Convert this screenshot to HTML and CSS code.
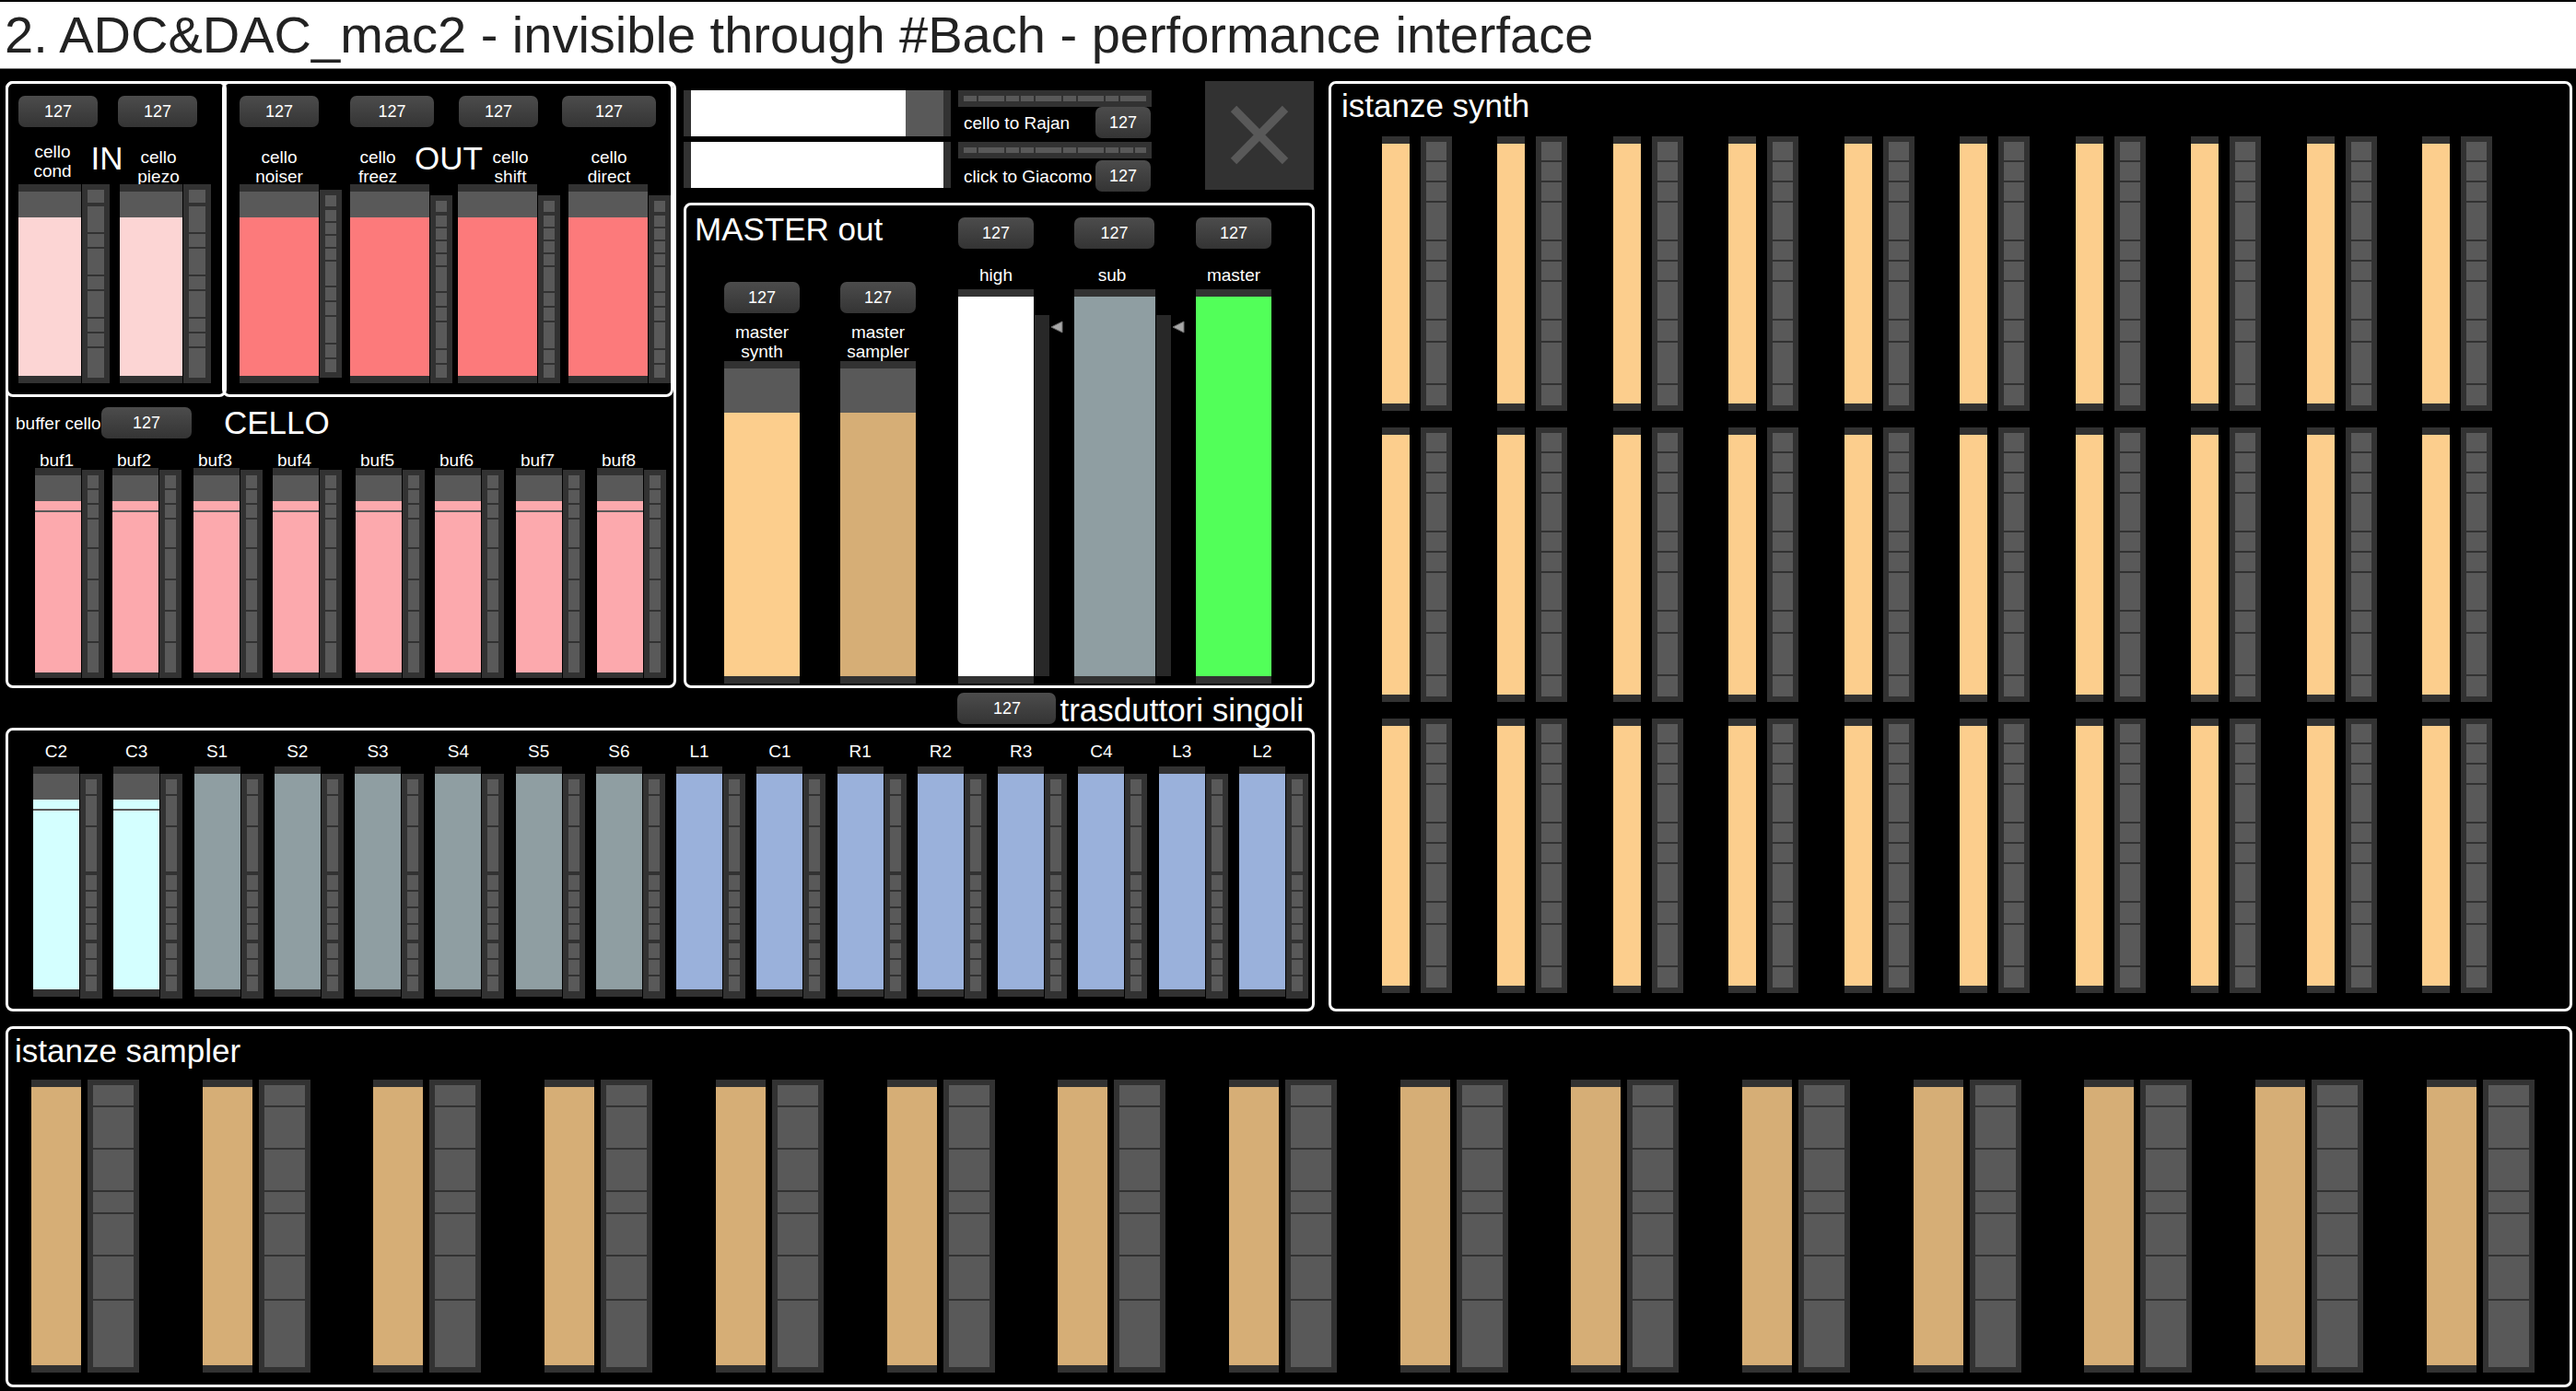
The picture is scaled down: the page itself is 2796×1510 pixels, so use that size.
FILE: index.html
```html
<!DOCTYPE html>
<html lang="it">
<head>
<meta charset="utf-8">
<title>ADC&amp;DAC_mac2 - performance interface</title>
<link rel="stylesheet" href="styles.css">
</head>
<body>
<header class="titlebar"><h1>2. ADC&amp;DAC_mac2 - invisible through #Bach - performance interface</h1></header>
<main class="board">
<div class="left">
<div class="top">
<section class="panel cello">
<div class="io">
<section class="panel in">
<div class="numbers"><input class="num" aria-label="cello cond level" value="127"><input class="num" aria-label="cello piezo level" value="127"></div>
<div class="names"><label class="raised" for="cond">cello<br>cond</label><h2>IN</h2><label for="piezo">cello<br>piezo</label></div>
<div class="faders">
<div class="strip"><input class="fader" id="cond" type="range" max="127" value="106"><i class="vu"></i></div>
<div class="strip"><input class="fader" id="piezo" type="range" max="127" value="106"><i class="vu"></i></div>
</div>
</section>
<section class="panel out">
<div class="numbers"><input class="num" aria-label="cello noiser level" value="127"><input class="num wide" aria-label="cello freez level" value="127"><input class="num" aria-label="cello shift level" value="127"><input class="num wider" aria-label="cello direct level" value="127"></div>
<div class="names"><label for="noiser">cello<br>noiser</label><label for="freez">cello<br>freez</label><h2>OUT</h2><label for="shift">cello<br>shift</label><label for="direct">cello<br>direct</label></div>
<div class="faders">
<div class="strip"><input class="fader" id="noiser" type="range" max="127" value="106"><i class="vu"></i></div>
<div class="strip"><input class="fader" id="freez" type="range" max="127" value="106"><i class="vu"></i></div>
<div class="strip"><input class="fader" id="shift" type="range" max="127" value="106"><i class="vu"></i></div>
<div class="strip"><input class="fader" id="direct" type="range" max="127" value="106"><i class="vu"></i></div>
</div>
</section>
</div>
<div class="bufhead"><label for="bufcello">buffer cello</label><input class="num" id="bufcello" value="127"><h2>CELLO</h2></div>
<div class="buffers">
<div class="channel"><label for="buf1">buf1</label><div class="strip"><input class="fader marked" id="buf1" type="range" max="127" value="110"><i class="vu"></i></div></div>
<div class="channel"><label for="buf2">buf2</label><div class="strip"><input class="fader marked" id="buf2" type="range" max="127" value="110"><i class="vu"></i></div></div>
<div class="channel"><label for="buf3">buf3</label><div class="strip"><input class="fader marked" id="buf3" type="range" max="127" value="110"><i class="vu"></i></div></div>
<div class="channel"><label for="buf4">buf4</label><div class="strip"><input class="fader marked" id="buf4" type="range" max="127" value="110"><i class="vu"></i></div></div>
<div class="channel"><label for="buf5">buf5</label><div class="strip"><input class="fader marked" id="buf5" type="range" max="127" value="110"><i class="vu"></i></div></div>
<div class="channel"><label for="buf6">buf6</label><div class="strip"><input class="fader marked" id="buf6" type="range" max="127" value="110"><i class="vu"></i></div></div>
<div class="channel"><label for="buf7">buf7</label><div class="strip"><input class="fader marked" id="buf7" type="range" max="127" value="110"><i class="vu"></i></div></div>
<div class="channel"><label for="buf8">buf8</label><div class="strip"><input class="fader marked" id="buf8" type="range" max="127" value="110"><i class="vu"></i></div></div>
</div>
</section>
<div class="middle">
<div class="sends">
<div class="sendfaders"><input class="hfader partial" type="range" aria-label="cello to Rajan fader" max="127" value="108"><input class="hfader" type="range" aria-label="click to Giacomo fader" max="127" value="127"></div>
<div class="sendlevels">
<i class="hvu"></i>
<div class="send"><label for="rajan">cello to Rajan</label><input class="num" id="rajan" value="127"></div>
<i class="hvu split"></i>
<div class="send"><label for="giacomo">click to Giacomo</label><input class="num" id="giacomo" value="127"></div>
</div>
<button class="toggle" type="button" aria-label="audio on/off"><svg viewBox="0 0 118 118" width="118" height="118"><path d="M31 30L87 87M87 30L31 87" stroke="#595959" stroke-width="9"/></svg></button>
</div>
<section class="panel master">
<div class="mix">
<h2>MASTER out</h2>
<div class="submix">
<div class="channel synthbus"><input class="num" aria-label="master synth level" value="127"><label for="msynth">master<br>synth</label><input class="fader" id="msynth" type="range" max="127" value="106"></div>
<div class="channel samplerbus"><input class="num" aria-label="master sampler level" value="127"><label for="msampler">master<br>sampler</label><input class="fader" id="msampler" type="range" max="127" value="106"></div>
</div>
</div>
<div class="channel high"><input class="num" aria-label="high level" value="127"><label for="high">high</label><div class="strip"><input class="fader" id="high" type="range" max="127" value="127"><i class="gain"></i><svg class="arrow" viewBox="0 0 14 14" width="14" height="14"><path d="M1 7L13 1V13Z" fill="#a8a8a8" stroke="#6b6b6b"/></svg></div></div>
<div class="channel sub"><input class="num wide" aria-label="sub level" value="127"><label for="sub">sub</label><div class="strip"><input class="fader" id="sub" type="range" max="127" value="127"><i class="gain"></i><svg class="arrow" viewBox="0 0 14 14" width="14" height="14"><path d="M1 7L13 1V13Z" fill="#a8a8a8" stroke="#6b6b6b"/></svg></div></div>
<div class="channel main"><input class="num" aria-label="master level" value="127"><label for="master">master</label><div class="strip"><input class="fader" id="master" type="range" max="127" value="127"></div></div>
</section>
</div>
</div>
<div class="transhead"><input class="num" id="trans" value="127"><label for="trans">trasduttori singoli</label></div>
<section class="panel transducers">
<div class="channel center"><label for="tC2">C2</label><div class="strip"><input class="fader marked" id="tC2" type="range" max="127" value="112"><i class="vu"></i></div></div>
<div class="channel center"><label for="tC3">C3</label><div class="strip"><input class="fader marked" id="tC3" type="range" max="127" value="112"><i class="vu"></i></div></div>
<div class="channel subs"><label for="tS1">S1</label><div class="strip"><input class="fader" id="tS1" type="range" max="127" value="127"><i class="vu"></i></div></div>
<div class="channel subs"><label for="tS2">S2</label><div class="strip"><input class="fader" id="tS2" type="range" max="127" value="127"><i class="vu"></i></div></div>
<div class="channel subs"><label for="tS3">S3</label><div class="strip"><input class="fader" id="tS3" type="range" max="127" value="127"><i class="vu"></i></div></div>
<div class="channel subs"><label for="tS4">S4</label><div class="strip"><input class="fader" id="tS4" type="range" max="127" value="127"><i class="vu"></i></div></div>
<div class="channel subs"><label for="tS5">S5</label><div class="strip"><input class="fader" id="tS5" type="range" max="127" value="127"><i class="vu"></i></div></div>
<div class="channel subs"><label for="tS6">S6</label><div class="strip"><input class="fader" id="tS6" type="range" max="127" value="127"><i class="vu"></i></div></div>
<div class="channel"><label for="tL1">L1</label><div class="strip"><input class="fader" id="tL1" type="range" max="127" value="127"><i class="vu"></i></div></div>
<div class="channel"><label for="tC1">C1</label><div class="strip"><input class="fader" id="tC1" type="range" max="127" value="127"><i class="vu"></i></div></div>
<div class="channel"><label for="tR1">R1</label><div class="strip"><input class="fader" id="tR1" type="range" max="127" value="127"><i class="vu"></i></div></div>
<div class="channel"><label for="tR2">R2</label><div class="strip"><input class="fader" id="tR2" type="range" max="127" value="127"><i class="vu"></i></div></div>
<div class="channel"><label for="tR3">R3</label><div class="strip"><input class="fader" id="tR3" type="range" max="127" value="127"><i class="vu"></i></div></div>
<div class="channel"><label for="tC4">C4</label><div class="strip"><input class="fader" id="tC4" type="range" max="127" value="127"><i class="vu"></i></div></div>
<div class="channel"><label for="tL3">L3</label><div class="strip"><input class="fader" id="tL3" type="range" max="127" value="127"><i class="vu"></i></div></div>
<div class="channel"><label for="tL2">L2</label><div class="strip"><input class="fader" id="tL2" type="range" max="127" value="127"><i class="vu"></i></div></div>
</section>
</div>
<section class="panel synth">
<h2>istanze synth</h2>
<div class="bank">
<div class="strip"><input class="fader" type="range" aria-label="synth 1" max="127" value="127"><i class="vu"></i></div>
<div class="strip"><input class="fader" type="range" aria-label="synth 2" max="127" value="127"><i class="vu"></i></div>
<div class="strip"><input class="fader" type="range" aria-label="synth 3" max="127" value="127"><i class="vu"></i></div>
<div class="strip"><input class="fader" type="range" aria-label="synth 4" max="127" value="127"><i class="vu"></i></div>
<div class="strip"><input class="fader" type="range" aria-label="synth 5" max="127" value="127"><i class="vu"></i></div>
<div class="strip"><input class="fader" type="range" aria-label="synth 6" max="127" value="127"><i class="vu"></i></div>
<div class="strip"><input class="fader" type="range" aria-label="synth 7" max="127" value="127"><i class="vu"></i></div>
<div class="strip"><input class="fader" type="range" aria-label="synth 8" max="127" value="127"><i class="vu"></i></div>
<div class="strip"><input class="fader" type="range" aria-label="synth 9" max="127" value="127"><i class="vu"></i></div>
<div class="strip"><input class="fader" type="range" aria-label="synth 10" max="127" value="127"><i class="vu"></i></div>
</div>
<div class="bank">
<div class="strip"><input class="fader" type="range" aria-label="synth 11" max="127" value="127"><i class="vu"></i></div>
<div class="strip"><input class="fader" type="range" aria-label="synth 12" max="127" value="127"><i class="vu"></i></div>
<div class="strip"><input class="fader" type="range" aria-label="synth 13" max="127" value="127"><i class="vu"></i></div>
<div class="strip"><input class="fader" type="range" aria-label="synth 14" max="127" value="127"><i class="vu"></i></div>
<div class="strip"><input class="fader" type="range" aria-label="synth 15" max="127" value="127"><i class="vu"></i></div>
<div class="strip"><input class="fader" type="range" aria-label="synth 16" max="127" value="127"><i class="vu"></i></div>
<div class="strip"><input class="fader" type="range" aria-label="synth 17" max="127" value="127"><i class="vu"></i></div>
<div class="strip"><input class="fader" type="range" aria-label="synth 18" max="127" value="127"><i class="vu"></i></div>
<div class="strip"><input class="fader" type="range" aria-label="synth 19" max="127" value="127"><i class="vu"></i></div>
<div class="strip"><input class="fader" type="range" aria-label="synth 20" max="127" value="127"><i class="vu"></i></div>
</div>
<div class="bank">
<div class="strip"><input class="fader" type="range" aria-label="synth 21" max="127" value="127"><i class="vu"></i></div>
<div class="strip"><input class="fader" type="range" aria-label="synth 22" max="127" value="127"><i class="vu"></i></div>
<div class="strip"><input class="fader" type="range" aria-label="synth 23" max="127" value="127"><i class="vu"></i></div>
<div class="strip"><input class="fader" type="range" aria-label="synth 24" max="127" value="127"><i class="vu"></i></div>
<div class="strip"><input class="fader" type="range" aria-label="synth 25" max="127" value="127"><i class="vu"></i></div>
<div class="strip"><input class="fader" type="range" aria-label="synth 26" max="127" value="127"><i class="vu"></i></div>
<div class="strip"><input class="fader" type="range" aria-label="synth 27" max="127" value="127"><i class="vu"></i></div>
<div class="strip"><input class="fader" type="range" aria-label="synth 28" max="127" value="127"><i class="vu"></i></div>
<div class="strip"><input class="fader" type="range" aria-label="synth 29" max="127" value="127"><i class="vu"></i></div>
<div class="strip"><input class="fader" type="range" aria-label="synth 30" max="127" value="127"><i class="vu"></i></div>
</div>
</section>
<section class="panel sampler">
<h2>istanze sampler</h2>
<div class="bank">
<div class="strip"><input class="fader" type="range" aria-label="sampler 1" max="127" value="127"><i class="vu"></i></div>
<div class="strip"><input class="fader" type="range" aria-label="sampler 2" max="127" value="127"><i class="vu"></i></div>
<div class="strip"><input class="fader" type="range" aria-label="sampler 3" max="127" value="127"><i class="vu"></i></div>
<div class="strip"><input class="fader" type="range" aria-label="sampler 4" max="127" value="127"><i class="vu"></i></div>
<div class="strip"><input class="fader" type="range" aria-label="sampler 5" max="127" value="127"><i class="vu"></i></div>
<div class="strip"><input class="fader" type="range" aria-label="sampler 6" max="127" value="127"><i class="vu"></i></div>
<div class="strip"><input class="fader" type="range" aria-label="sampler 7" max="127" value="127"><i class="vu"></i></div>
<div class="strip"><input class="fader" type="range" aria-label="sampler 8" max="127" value="127"><i class="vu"></i></div>
<div class="strip"><input class="fader" type="range" aria-label="sampler 9" max="127" value="127"><i class="vu"></i></div>
<div class="strip"><input class="fader" type="range" aria-label="sampler 10" max="127" value="127"><i class="vu"></i></div>
<div class="strip"><input class="fader" type="range" aria-label="sampler 11" max="127" value="127"><i class="vu"></i></div>
<div class="strip"><input class="fader" type="range" aria-label="sampler 12" max="127" value="127"><i class="vu"></i></div>
<div class="strip"><input class="fader" type="range" aria-label="sampler 13" max="127" value="127"><i class="vu"></i></div>
<div class="strip"><input class="fader" type="range" aria-label="sampler 14" max="127" value="127"><i class="vu"></i></div>
<div class="strip"><input class="fader" type="range" aria-label="sampler 15" max="127" value="127"><i class="vu"></i></div>
</div>
</section>
</main>
</body>
</html>
```
FILE: styles.css
```css
* { box-sizing: border-box; }
:root {
  --dark: #323232;
  --grey: #595959;
}
body {
  margin: 0;
  background: #000;
  color: #fff;
  font: 19px/21px "Liberation Sans", Arial, sans-serif;
}
h1, h2 { margin: 0; font-weight: 400; white-space: nowrap; }
h2 { font-size: 35px; line-height: 40px; }
label { white-space: nowrap; }
i { display: block; }

.titlebar {
  background: #fff;
  color: #222;
  border-top: 2px solid #000;
  border-bottom: 1px solid #777;
  padding-left: 5px;
}
h1 { font-size: 56px; line-height: 72px; }

/* page grid */
.board {
  display: grid;
  grid-template-columns: minmax(0, 1421fr) minmax(0, 1350fr);
  gap: 16px 15px;
  padding: 13px 4px 4px 6px;
}
.top { display: grid; grid-template-columns: minmax(0, 728fr) minmax(0, 685fr); column-gap: 8px; }
.panel { border: 3px solid #fff; border-radius: 8px; min-width: 0; }
.sampler { grid-column: 1 / -1; }

/* controls */
.num {
  display: block;
  width: 86px;
  height: 34px;
  padding: 0;
  border: 0;
  border-radius: 7px;
  background: linear-gradient(#4c4c4c, #343434);
  color: #fff;
  font: 18px/34px "Liberation Sans", Arial, sans-serif;
  text-align: center;
}
.fader, .hfader { appearance: none; display: block; margin: 0; flex: none; }
.fader {
  --top: 8px;
  --foot: 8px;
  writing-mode: vertical-lr;
  direction: rtl;
  background: linear-gradient(
    var(--dark) 8px, var(--grey) 8px var(--top),
    var(--color) var(--top) calc(100% - var(--foot)),
    var(--dark) calc(100% - var(--foot)));
}
.fader.marked {
  background:
    linear-gradient(var(--grey), var(--grey)) 0 46px / 100% 2px no-repeat,
    linear-gradient(
      var(--dark) 8px, var(--grey) 8px var(--top),
      var(--color) var(--top) calc(100% - var(--foot)),
      var(--dark) calc(100% - var(--foot)));
}
.fader::-webkit-slider-thumb, .hfader::-webkit-slider-thumb { appearance: none; width: 0; height: 0; }
.hfader {
  width: 100%;
  height: 50px;
  background: #fff;
  border: solid var(--dark);
  border-width: 0 8px;
}
.hfader.partial { background: linear-gradient(90deg, #fff 85%, var(--grey) 85%); }
.strip { display: flex; align-items: flex-start; gap: 1px; }
.vu { flex: none; border: 6px solid var(--dark); background: var(--grey); }
.channel label { display: block; text-align: center; }

/* cello in / out */
.io { display: grid; grid-template-columns: minmax(0, 240fr) minmax(0, 485fr); margin: -3px 0 0 -3px; }
.io .panel { height: 343px; padding-top: 13px; }
.in { padding: 0 12px 0 11px; }
.out { margin-left: -5px; padding-left: 16px; }
.numbers, .names, .faders { display: grid; }
.names { height: 62px; padding-top: 22px; align-items: start; text-align: center; }
.names h2 { line-height: 24px; }
.names .raised { margin-top: -6px; }
.io .fader { height: 216px; --top: 36px; }
.in .numbers { grid-template-columns: 108fr 103fr; }
.in .names { grid-template-columns: 74fr 44fr 68fr 25fr; }
.in .faders { grid-template-columns: 110fr 101fr; }
.in .fader { width: 68px; --color: #fcd5d4; }
.in .vu {
  width: 30px;
  height: 216px;
  background: linear-gradient(
    var(--grey) 14px, var(--dark) 14px 18px, var(--grey) 18px 46px, var(--dark) 46px 48px,
    var(--grey) 48px 62px, var(--dark) 62px 64px, var(--grey) 64px 92px, var(--dark) 92px 94px,
    var(--grey) 94px 108px, var(--dark) 108px 110px, var(--grey) 110px 138px, var(--dark) 138px 140px,
    var(--grey) 140px 154px, var(--dark) 154px 156px, var(--grey) 156px 170px, var(--dark) 170px 172px,
    var(--grey) 172px);
}
.out .numbers { grid-template-columns: 120fr 118fr 112fr 118fr; }
.out .names { grid-template-columns: 86fr 26fr 76fr 78fr 56fr 12fr 134fr; }
.out .names > :nth-child(2) { grid-column: 3; }
.out .names > :nth-child(5) { grid-column: 7; }
.out .faders { grid-template-columns: 120fr 118fr 120fr 110fr; }
.out .wide { width: 91px; }
.out .wider { width: 102px; }
.out .fader { width: 86px; --color: #fc7a7b; }
.out .strip { align-items: flex-end; }
.out .strip:first-child { align-items: center; }
.out .vu {
  width: 24px;
  height: 204px;
  background: linear-gradient(
    var(--grey) 12px, var(--dark) 12px 16px, var(--grey) 16px 28px, var(--dark) 28px 30px,
    var(--grey) 30px 42px, var(--dark) 42px 44px, var(--grey) 44px 56px, var(--dark) 56px 58px,
    var(--grey) 58px 70px, var(--dark) 70px 72px, var(--grey) 72px 98px, var(--dark) 98px 100px,
    var(--grey) 100px 114px, var(--dark) 114px 116px, var(--grey) 116px 130px, var(--dark) 130px 132px,
    var(--grey) 132px 160px, var(--dark) 160px 162px, var(--grey) 162px 176px, var(--dark) 176px 178px,
    var(--grey) 178px);
}

/* cello buffers */
.bufhead { display: flex; align-items: center; padding: 11px 0 0 8px; }
.bufhead label { width: 93px; }
.bufhead .num { width: 98px; margin-right: 35px; }
.bufhead h2 { line-height: 34px; }
.buffers {
  display: grid;
  grid-template-columns: 84fr 88fr 86fr 90fr 86fr 88fr 88fr 80fr;
  padding: 16px 3px 8px 29px;
}
.buffers label { width: 47px; line-height: 16px; }
.buffers .fader { width: 50px; height: 228px; --top: 36px; --foot: 6px; --color: #fca9ad; }
.buffers .strip { align-items: flex-end; }
.buffers .vu {
  width: 24px;
  height: 226px;
  background: linear-gradient(
    var(--grey) 14px, var(--dark) 14px 16px, var(--grey) 16px 30px, var(--dark) 30px 32px,
    var(--grey) 32px 46px, var(--dark) 46px 48px, var(--grey) 48px 78px, var(--dark) 78px 80px,
    var(--grey) 80px 112px, var(--dark) 112px 114px, var(--grey) 114px 146px, var(--dark) 146px 148px,
    var(--grey) 148px 180px, var(--dark) 180px 182px, var(--grey) 182px);
}

/* sends */
.middle { display: flex; flex-direction: column; min-width: 0; }
.sends {
  display: grid;
  grid-template-columns: minmax(0, 298fr) 210px minmax(0, 58fr) 119px;
  height: 132px;
  align-items: start;
}
.sendfaders { display: grid; gap: 6px; padding-top: 10px; margin-right: 8px; }
.sendlevels { padding-top: 10px; }
.toggle { grid-column: 4; width: 118px; height: 118px; padding: 0; border: 0; background: var(--dark); }
.toggle svg { display: block; }
.send { display: flex; justify-content: space-between; align-items: center; padding: 0 1px 0 6px; margin-bottom: 4px; }
.send .num { width: 60px; }
.split + .send { padding-top: 2px; }
.hvu {
  height: 18px;
  border: 6px solid var(--dark);
  background: linear-gradient(90deg,
    var(--grey) 14px, var(--dark) 14px 16px, var(--grey) 16px 44px, var(--dark) 44px 46px,
    var(--grey) 46px 60px, var(--dark) 60px 62px, var(--grey) 62px 76px, var(--dark) 76px 78px,
    var(--grey) 78px 106px, var(--dark) 106px 108px, var(--grey) 108px 122px, var(--dark) 122px 124px,
    var(--grey) 124px 152px, var(--dark) 152px 154px, var(--grey) 154px 168px, var(--dark) 168px 170px,
    var(--grey) 170px);
}
.hvu.split {
  background: linear-gradient(90deg,
    var(--grey) 14px, var(--dark) 14px 16px, var(--grey) 16px 44px, var(--dark) 44px 46px,
    var(--grey) 46px 60px, var(--dark) 60px 62px, var(--grey) 62px 76px, var(--dark) 76px 78px,
    var(--grey) 78px 106px, var(--dark) 106px 108px, var(--grey) 108px 122px, var(--dark) 122px 124px,
    var(--grey) 124px 152px, var(--dark) 152px 154px, var(--grey) 154px 168px, var(--dark) 168px 170px,
    var(--grey) 170px 184px, var(--dark) 184px 186px, var(--grey) 186px);
}

/* master */
.master {
  flex: 1;
  display: grid;
  grid-template-columns: minmax(0, 295fr) minmax(0, 126fr) minmax(0, 132fr) minmax(0, 126fr);
  padding: 13px 0 2px;
}
.mix h2 { padding-left: 9px; line-height: 26px; }
.submix { display: grid; grid-template-columns: 126fr 128fr; padding: 44px 0 0 41px; }
.master .num { width: 82px; }
.master .num.wide { width: 87px; }
.master label { width: 82px; }
.submix label { padding-top: 10px; height: 52px; }
.submix .fader { width: 82px; height: 350px; --top: 56px; }
.synthbus { --color: #fcce8d; }
.samplerbus { --color: #d6ae76; }
.master > .channel label { height: 44px; padding-top: 18px; }
.master > .channel .fader { width: 82px; height: 428px; }
.master > .sub .fader { width: 88px; }
.high { --color: #fff; }
.sub { --color: #8f9ea2; }
.main { --color: #52ff59; }
.gain { flex: none; width: 16px; height: 392px; margin-top: 28px; background: #282828; }
.arrow { flex: none; margin-top: 34px; }

/* transducers */
.transhead { display: flex; align-items: center; justify-content: flex-end; gap: 4px; height: 43px; padding: 1px 12px 0 0; }
.transhead .num { width: 107px; }
.transhead label { font-size: 35px; line-height: 36px; padding-top: 4px; }
.transducers { display: flex; justify-content: space-between; padding: 13px 4px 11px 27px; }
.transducers label { width: 50px; line-height: 20px; margin-bottom: 6px; }
.transducers .fader { width: 50px; height: 250px; --color: #9ab1db; }
.transducers .subs .fader { --color: #8f9ea2; }
.transducers .center .fader { --top: 36px; --color: #d4ffff; }
.transducers .vu {
  width: 24px;
  height: 244px;
  margin-top: 8px;
  border-bottom-width: 8px;
  background: linear-gradient(
    var(--grey) 16px, var(--dark) 16px 18px, var(--grey) 18px 50px, var(--dark) 50px 52px,
    var(--grey) 52px 100px, var(--dark) 100px 104px, var(--grey) 104px 120px, var(--dark) 120px 122px,
    var(--grey) 122px 138px, var(--dark) 138px 140px, var(--grey) 140px 156px, var(--dark) 156px 158px,
    var(--grey) 158px 174px, var(--dark) 174px 178px, var(--grey) 178px 194px, var(--dark) 194px 196px,
    var(--grey) 196px 212px, var(--dark) 212px 214px, var(--grey) 214px);
}

/* instance banks */
.bank { display: flex; justify-content: space-between; }
.synth { padding: 4px 84px 0 55px; }
.synth h2 { margin: 0 0 13px -44px; }
.synth .bank { margin-bottom: 18px; }
.synth .bank:last-child { margin-bottom: 0; }
.synth .strip { gap: 12px; }
.synth .fader { width: 30px; height: 298px; --color: #fcce8d; }
.synth .vu {
  width: 34px;
  height: 298px;
  background: linear-gradient(
    var(--grey) 20px, var(--dark) 20px 22px, var(--grey) 22px 42px, var(--dark) 42px 44px,
    var(--grey) 44px 64px, var(--dark) 64px 66px, var(--grey) 66px 106px, var(--dark) 106px 108px,
    var(--grey) 108px 128px, var(--dark) 128px 130px, var(--grey) 130px 150px, var(--dark) 150px 152px,
    var(--grey) 152px 192px, var(--dark) 192px 194px, var(--grey) 194px 216px, var(--dark) 216px 218px,
    var(--grey) 218px 262px, var(--dark) 262px 264px, var(--grey) 264px);
}
.sampler { padding: 4px 38px 13px 25px; }
.sampler h2 { margin: 0 0 11px -18px; }
.sampler .strip { gap: 7px; }
.sampler .fader { width: 54px; height: 318px; --color: #d6ae76; }
.sampler .vu {
  width: 56px;
  height: 318px;
  background: linear-gradient(
    var(--grey) 22px, var(--dark) 22px 24px, var(--grey) 24px 68px, var(--dark) 68px 70px,
    var(--grey) 70px 114px, var(--dark) 114px 116px, var(--grey) 116px 138px, var(--dark) 138px 140px,
    var(--grey) 140px 184px, var(--dark) 184px 186px, var(--grey) 186px 232px, var(--dark) 232px 234px,
    var(--grey) 234px);
}
```
